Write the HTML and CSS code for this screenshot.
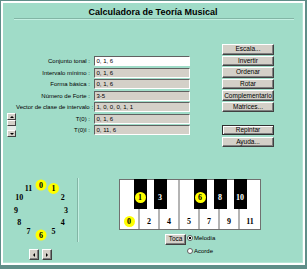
FILE: index.html
```html
<!DOCTYPE html>
<html lang="es">
<head>
    <meta charset="UTF-8">
    <meta name="viewport" content="width=device-width, initial-scale=1.0">
    <title>Calculadora de Teoría Musical</title>
    <link rel="stylesheet" href="styles.css">
</head>
<body>
    <div class="app">
        <h1 class="title">Calculadora de Teoría Musical</h1>
        <div class="rule"></div>

        <div class="main">
            <div class="scroll">
                <span class="sbtn up"></span>
                <span class="thumb"></span>
                <span class="track"></span>
                <span class="sbtn down"></span>
            </div>
            <div class="form">
                <div class="row"><label>Conjunto tonal :</label><div class="field edit">0, 1, 6</div></div>
                <div class="row"><label>Intervalo mínimo :</label><div class="field">0, 1, 6</div></div>
                <div class="row"><label>Forma básica :</label><div class="field">0, 1, 6</div></div>
                <div class="row"><label>Número de Forte :</label><div class="field">3-5</div></div>
                <div class="row"><label>Vector de clase de intervalo :</label><div class="field">1, 0, 0, 0, 1, 1</div></div>
                <div class="row"><label>T(0) :</label><div class="field">0, 1, 6</div></div>
                <div class="row"><label>T(0)I :</label><div class="field">0, 11, 6</div></div>
            </div>
            <div class="actions">
                <button class="btn">Escala...</button>
                <button class="btn">Invertir</button>
                <button class="btn">Ordenar</button>
                <button class="btn">Rotar</button>
                <button class="btn">Complementario</button>
                <button class="btn">Matrices...</button>
                <button class="btn default gap">Repintar</button>
                <button class="btn">Ayuda...</button>
            </div>
        </div>

        <div class="bottom">
            <div class="clock-col">
                <svg class="clock" width="74" height="66" viewBox="0 0 74 66">
                    <circle class="mark" cx="38" cy="7" r="5.5"/>
                    <circle class="mark" cx="50.5" cy="10.4" r="5.5"/>
                    <circle class="mark" cx="38" cy="57" r="5.5"/>
                    <text x="38" y="7">0</text>
                    <text x="50.5" y="10.4">1</text>
                    <text x="59.7" y="19.5">2</text>
                    <text x="63" y="32">3</text>
                    <text x="59.7" y="44.5">4</text>
                    <text x="50.5" y="53.6">5</text>
                    <text x="38" y="57">6</text>
                    <text x="25.5" y="53.6">7</text>
                    <text x="16.3" y="44.5">8</text>
                    <text x="13" y="32">9</text>
                    <text x="16.3" y="19.5">10</text>
                    <text x="25.5" y="10.4">11</text>
                </svg>
                <div class="nav">
                    <button class="btn nav-btn prev"></button>
                    <button class="btn nav-btn next"></button>
                </div>
            </div>

            <div class="divider"></div>

            <div class="piano-col">
                <div class="piano">
                    <div class="wkey"><span class="num hit">0</span></div>
                    <div class="wkey"><span class="num">2</span></div>
                    <div class="wkey"><span class="num">4</span></div>
                    <div class="wkey"><span class="num">5</span></div>
                    <div class="wkey"><span class="num">7</span></div>
                    <div class="wkey"><span class="num">9</span></div>
                    <div class="wkey last"><span class="num">11</span></div>

                    <div class="bkey" style="left: 13.5px"><span class="num hit">1</span></div>
                    <div class="bkey" style="left: 33.5px"><span class="num">3</span></div>
                    <div class="bkey" style="left: 73.5px"><span class="num hit">6</span></div>
                    <div class="bkey" style="left: 93.5px"><span class="num">8</span></div>
                    <div class="bkey" style="left: 113.5px"><span class="num">10</span></div>
                </div>
                <div class="controls">
                    <button class="btn play">Toca</button>
                    <div class="radios">
                        <label class="opt"><input type="radio" name="mode" checked> Melodía</label>
                        <label class="opt"><input type="radio" name="mode"> Acorde</label>
                    </div>
                </div>
            </div>
        </div>
    </div>
</body>
</html>
```

FILE: styles.css
```css
* {
    box-sizing: border-box;
}
html {
    background: #5f8e88;
}
body {
    margin: 0;
    font-family: "Liberation Sans", Arial, sans-serif;
    color: #000;
}
.app {
    margin: 1px 2px 4px 1px;
    height: 264px;
    border: 2px solid #fff;
    background: #a0dcc8;
    box-shadow: inset -1px -1px 0 #b6e6d6;
}
.title {
    margin: 0;
    padding-top: 4px;
    font-size: 9px;
    line-height: 10px;
    font-weight: bold;
    text-align: center;
}
.rule {
    margin: 1px 9px 0 11px;
    border-top: 1px solid #82b5a5;
    border-bottom: 1px solid #c4efe2;
}

/* top part: fields and buttons */
.main {
    display: flex;
    height: 104px;
    margin-top: 24px;
    padding-left: 4px;
}
.scroll {
    display: flex;
    flex-direction: column;
    width: 9px;
    height: 24px;
    margin-top: 69px;
    background: #e4ece8;
}
.sbtn, .thumb {
    display: flex;
    align-items: center;
    justify-content: center;
    height: 7px;
    background: #d4d0c8;
    border: 1px solid;
    border-color: #fff #404040 #404040 #fff;
}
.thumb {
    height: 6px;
}
.track {
    flex: 1;
}
.sbtn::before {
    content: "";
    border-left: 2px solid transparent;
    border-right: 2px solid transparent;
}
.up::before {
    border-bottom: 2px solid #000;
}
.down::before {
    border-top: 2px solid #000;
}
.form {
    display: flex;
    flex-direction: column;
    gap: 1.5px;
    width: 173.5px;
    padding-top: 12px;
}
.row {
    display: flex;
    align-items: center;
    height: 10px;
}
.row label {
    width: 75px;
    padding-right: 1px;
    font-size: 6px;
    text-align: right;
    white-space: nowrap;
}
.field {
    width: 96px;
    height: 10px;
    margin-left: 2.5px;
    padding-left: 2px;
    font-size: 6px;
    line-height: 8px;
    background: #d4d0c8;
    border: 1px solid;
    border-color: #606060 #fff #fff #606060;
    white-space: nowrap;
}
.field.edit {
    background: #fff;
}
.actions {
    display: flex;
    flex-direction: column;
    gap: 1.1px;
    width: 52px;
    margin-left: 32.5px;
}
.btn {
    height: 10.5px;
    padding: 0;
    font-family: "Liberation Sans", Arial, sans-serif;
    font-size: 6.5px;
    line-height: 8px;
    color: #000;
    background: #d4d0c8;
    border: 1px solid;
    border-color: #fff #404040 #404040 #fff;
    box-shadow: inset -1px -1px 0 #808080;
}
.btn.default {
    outline: 1px solid #303030;
    outline-offset: -1px;
    border-color: #303030;
    box-shadow: inset 1px 1px 0 #fff, inset -1px -1px 0 #808080;
}
.btn.gap {
    margin-top: 11.4px;
}

/* bottom part: clock and keyboard */
.bottom {
    display: flex;
    margin-top: 30px;
}
.clock-col {
    width: 74px;
}
.clock {
    display: block;
}
.clock text {
    font-family: "Liberation Serif", "Times New Roman", serif;
    font-size: 8px;
    font-weight: bold;
    text-anchor: middle;
    dominant-baseline: central;
}
.clock .mark {
    fill: #ffff00;
}
.nav {
    display: flex;
    gap: 3px;
    margin: 5px 0 0 26px;
}
.nav-btn {
    display: flex;
    align-items: center;
    justify-content: center;
    width: 10px;
    height: 11px;
}
.nav-btn::before {
    content: "";
    border-top: 2px solid transparent;
    border-bottom: 2px solid transparent;
}
.prev::before {
    border-right: 2px solid #000;
}
.next::before {
    border-left: 2px solid #000;
}
.divider {
    width: 2px;
    height: 64px;
    border-left: 1px solid #82b5a5;
    border-right: 1px solid #c4efe2;
}
.piano-col {
    margin-left: 40px;
}
.piano {
    position: relative;
    display: flex;
    width: 142px;
    height: 51px;
    margin-top: 1px;
    background: #fff;
    border: 1px solid #707070;
}
.num {
    display: flex;
    align-items: center;
    justify-content: center;
    width: 11px;
    height: 11px;
    font-family: "Liberation Serif", "Times New Roman", serif;
    font-size: 8px;
    font-weight: bold;
}
.num.hit {
    background: #ffff00;
    border-radius: 50%;
    color: #000;
}
.wkey {
    display: flex;
    flex-direction: column;
    align-items: center;
    justify-content: flex-end;
    width: 20px;
    padding-bottom: 2px;
    border-right: 2px solid #b4b4b4;
}
.wkey.last {
    border-right: none;
}
.bkey {
    position: absolute;
    top: -1px;
    display: flex;
    justify-content: center;
    width: 13px;
    height: 30px;
    padding-top: 13px;
    background: #000;
    color: #fff;
}
.controls {
    display: flex;
    margin: 4px 0 0 46px;
}
.play {
    width: 21px;
}
.radios {
    display: flex;
    flex-direction: column;
    gap: 4.5px;
    margin-left: 0.5px;
}
.opt {
    display: flex;
    align-items: center;
    height: 8px;
    font-size: 6px;
    white-space: nowrap;
}
.opt input {
    appearance: none;
    width: 6px;
    height: 6px;
    margin: 0 1.5px 0 0;
    border: 1px solid #606060;
    border-radius: 50%;
    background: #fff;
}
.opt input:checked {
    background: radial-gradient(circle, #000 1.2px, #fff 1.5px);
}
```
